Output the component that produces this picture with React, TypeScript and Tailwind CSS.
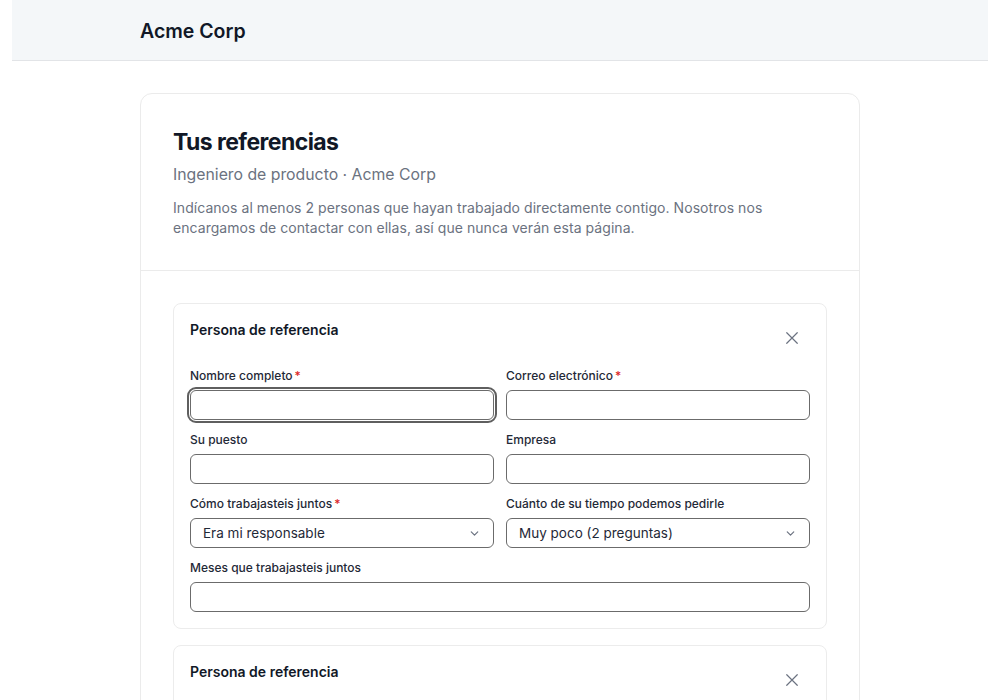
import React from "react";

const font = { fontFamily: "Inter, 'Noto Sans', sans-serif" };

function XIcon() {
  return (
    <svg width="18" height="18" viewBox="0 0 24 24" fill="none" stroke="#6b7280" strokeWidth="1.6" strokeLinecap="round">
      <path d="M5 5L19 19M19 5L5 19" />
    </svg>
  );
}

function Chevron() {
  return (
    <svg width="13" height="13" viewBox="0 0 24 24" fill="none" stroke="#6b7280" strokeWidth="2.2" strokeLinecap="round" strokeLinejoin="round">
      <path d="M6 9l6 6 6-6" />
    </svg>
  );
}

function Label({ text, required }: { text: string; required?: boolean }) {
  return (
    <div className="h-4 text-[12px] leading-4 font-medium text-[#1f2937] mb-1.5">
      {text}
      {required && <span className="text-[#dc2626] ml-0.5">*</span>}
    </div>
  );
}

function Input({ focused }: { focused?: boolean }) {
  return (
    <div
      className={
        "h-[30px] rounded-md border border-[#6b6b6b] bg-white " +
        (focused ? "outline-2 outline-offset-1 outline-[#5f5f5f]" : "")
      }
    />
  );
}

function Select({ value }: { value: string }) {
  return (
    <div className="h-[30px] rounded-md border border-[#6b6b6b] bg-white flex items-center justify-between pl-3 pr-3">
      <span className="text-[13.5px] text-[#1f2937]">{value}</span>
      <Chevron />
    </div>
  );
}

function Field({ label, required, children }: { label: string; required?: boolean; children: React.ReactNode }) {
  return (
    <div className="flex flex-col">
      <Label text={label} required={required} />
      {children}
    </div>
  );
}

function RefCard({ first }: { first?: boolean }) {
  return (
    <div className="rounded-lg border border-[#ececec] bg-white px-4 pt-4 pb-4">
      <div className="flex items-start justify-between h-9">
        <div className="text-[14px] leading-5 font-semibold text-[#111827]">Persona de referencia</div>
        <div className="w-9 h-9 flex items-center justify-center">
          <XIcon />
        </div>
      </div>
      <div className="mt-3 grid grid-cols-2 gap-x-3 gap-y-3">
        <Field label="Nombre completo" required>
          <Input focused={first} />
        </Field>
        <Field label="Correo electrónico" required>
          <Input />
        </Field>
        <Field label="Su puesto">
          <Input />
        </Field>
        <Field label="Empresa">
          <Input />
        </Field>
        <Field label="Cómo trabajasteis juntos" required>
          <Select value="Era mi responsable" />
        </Field>
        <Field label="Cuánto de su tiempo podemos pedirle">
          <Select value="Muy poco (2 preguntas)" />
        </Field>
        <div className="col-span-2">
          <Field label="Meses que trabajasteis juntos">
            <Input />
          </Field>
        </div>
      </div>
    </div>
  );
}

export default function App() {
  return (
    <div className="min-h-screen bg-white" style={font}>
      <div className="mx-3">
        <header className="h-[61px] bg-[#f4f7f9] border-b border-[#e2e4e7]">
          <div className="max-w-[720px] mx-auto h-[60px] flex items-center pt-1">
            <span className="text-[19.5px] font-semibold text-[#111827]">Acme Corp</span>
          </div>
        </header>
        <main className="max-w-[720px] mx-auto pt-8 pb-8">
          <div className="rounded-xl border border-[#ebebeb] bg-white">
            <div className="px-8 pt-8 pb-8 border-b border-[#ebebeb]">
              <h1 className="text-[23px] leading-8 font-bold tracking-tight text-[#111827]">Tus referencias</h1>
              <p className="mt-[5px] text-[15.8px] leading-6 text-[#6b7280]">Ingeniero de producto · Acme Corp</p>
              <p className="mt-[11px] text-[14px] leading-5 tracking-[0.05px] text-[#6b7280] max-w-[600px]">
                Indícanos al menos 2 personas que hayan trabajado directamente contigo. Nosotros nos encargamos de
                contactar con ellas, así que nunca verán esta página.
              </p>
            </div>
            <div className="px-8 pt-8 pb-8 flex flex-col gap-4">
              <RefCard first />
              <RefCard />
            </div>
          </div>
        </main>
      </div>
    </div>
  );
}
